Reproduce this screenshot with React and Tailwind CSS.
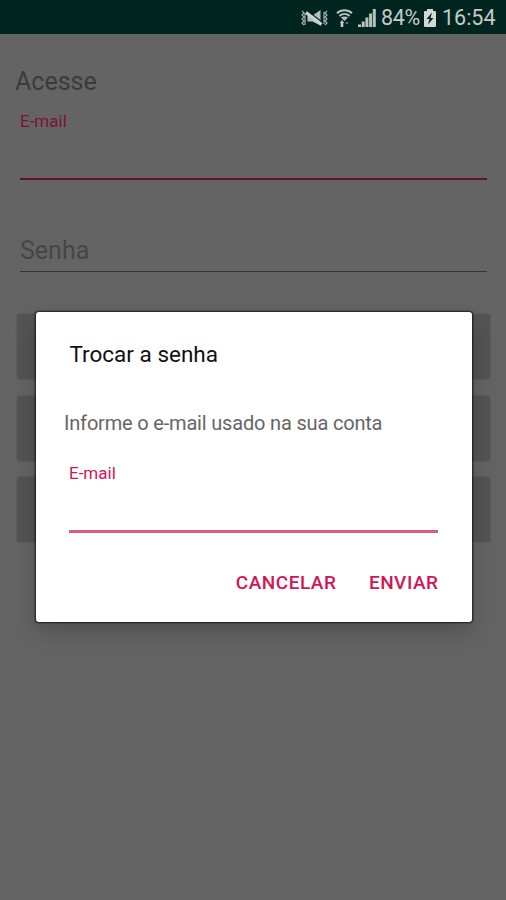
function VibrateOffIcon() {
  return (
    <svg width="27" height="18" viewBox="0 0 27 18" fill="none">
      <path
        d="M1 2l2 2-2 2 2 2-2 2 2 2-2 2 2 2M4 4v12M26 2l-2 2 2 2-2 2 2 2-2 2 2 2-2 2M23 3v12"
        stroke="#a3aeab"
        strokeWidth="1.2"
      />
      <path d="M6.500 6.500h5L19.500 1v15.500l-8-4h-5z" fill="#b5bfbc" />
      <path d="M6 1.500L22 14" stroke="#00251f" strokeWidth="1.500" />
      <path d="M5 3.500L20.500 15.500" stroke="#ccd3d1" strokeWidth="3.200" />
    </svg>
  );
}

function WifiIcon() {
  return (
    <svg width="17" height="18" viewBox="0 0 17 18" fill="none">
      <path
        d="M1 4.200C5 .4 12 .4 16 4.200M3.400 6.900c3-2.600 7.200-2.600 10.200 0"
        stroke="#b6c0bd"
        strokeWidth="2"
      />
      <path d="M5 8.500c2-1.500 5-1.500 7 0L8.500 12z" fill="#b6c0bd" />
      <path d="M3.800 14L6 11l2.200 3H7.300v4H4.700v-4z" fill="#c3cbc9" />
      <path d="M9.700 13h2.300v2H9.700z" fill="#65736f" />
    </svg>
  );
}

function SignalIcon() {
  return (
    <svg width="18" height="18" viewBox="0 0 18 18" fill="#b6c0bd">
      <path d="M0 15.500h3V18H0zM3.700 12.500h3V18h-3zM7.400 8.500h3V18h-3zM11.100 4.500h3V18h-3zM14.800 0h3v18h-3z" />
    </svg>
  );
}

function BatteryIcon() {
  return (
    <svg width="12" height="18" viewBox="0 0 12 18">
      <path d="M3 0h6v2h2.200l.8.800V17.200l-.8.800H.8l-.8-.8V2.800L.8 2H3z" fill="#d3d9d7" />
      <path d="M8 3.500L2.500 10h3L4 15.500 9.500 9h-3z" fill="#00251f" />
    </svg>
  );
}

function StatusBar() {
  return (
    <header className="flex h-[34px] items-center justify-end bg-[#00251f] pt-[2px] pr-[11px] text-[21.500px] leading-none text-[#c3cbc9]">
      <VibrateOffIcon />
      <div className="ml-[8px] flex">
        <WifiIcon />
      </div>
      <div className="ml-[5px] flex">
        <SignalIcon />
      </div>
      <span className="ml-[5px] w-[40px] whitespace-nowrap tracking-[-0.3px]">84%</span>
      <div className="ml-[3px] flex">
        <BatteryIcon />
      </div>
      <span className="ml-[6px] w-[53px] whitespace-nowrap">16:54</span>
    </header>
  );
}

function LoginForm() {
  return (
    <main className="px-[15px] pt-[32px]">
      <h1 className="h-[32px] text-[25px] leading-[32px] text-[#3b3b3b]">Acesse</h1>
      <div className="ml-[5px] mr-[4px] mt-[13px] h-[69px] border-b-2 border-[#65122e] text-[17px] leading-[20px] text-[#7f1238]">
        E-mail
      </div>
      <div className="ml-[5px] mr-[4px] mt-[56px] h-[36px] border-b border-[#343434] text-[25px] leading-[30px] text-[#464646]">
        Senha
      </div>
      <div className="ml-[2px] mr-[1px] mt-[42px] flex flex-col gap-[17px]">
        <div className="h-[65px] rounded-[3px] bg-[#545454] shadow-[0_0_2px_rgba(0,0,0,0.2)]" />
        <div className="h-[65px] rounded-[3px] bg-[#545454] shadow-[0_0_2px_rgba(0,0,0,0.2)]" />
        <div className="-mt-px h-[65px] rounded-[3px] bg-[#545454] shadow-[0_0_2px_rgba(0,0,0,0.2)]" />
      </div>
    </main>
  );
}

function ResetPasswordDialog() {
  return (
    <div className="absolute top-[312px] left-[35.500px] h-[309.500px] w-[436px] rounded-[3px] bg-white pt-[28px] shadow-[0_0_2px_0.5px_rgba(0,0,0,0.7),0_10px_26px_rgba(0,0,0,0.2)]">
      <h2 className="ml-[34px] text-[22.500px] leading-[28px] text-[#111111]">Trocar a senha</h2>
      <p className="mt-[42px] ml-[28.500px] text-[20px] leading-[26px] tracking-[-0.18px] text-[#666666]">
        Informe o e-mail usado na sua conta
      </p>
      <div className="ml-[33.500px] mr-[33.500px] mt-[27px] h-[70px] border-b-[3px] border-[#d5607f] text-[17px] leading-[20px] text-[#d31555]">
        E-mail
      </div>
      <div className="mr-[33px] mt-[37px] flex justify-end gap-[32.500px] text-[19px] leading-[26px] font-medium tracking-[0.5px] text-[#d31555]">
        <button>CANCELAR</button>
        <button>ENVIAR</button>
      </div>
    </div>
  );
}

export default function App() {
  return (
    <div className="relative h-[900px] w-[506px] overflow-hidden bg-[#646464] font-[Roboto,sans-serif]">
      <StatusBar />
      <LoginForm />
      <ResetPasswordDialog />
    </div>
  );
}
